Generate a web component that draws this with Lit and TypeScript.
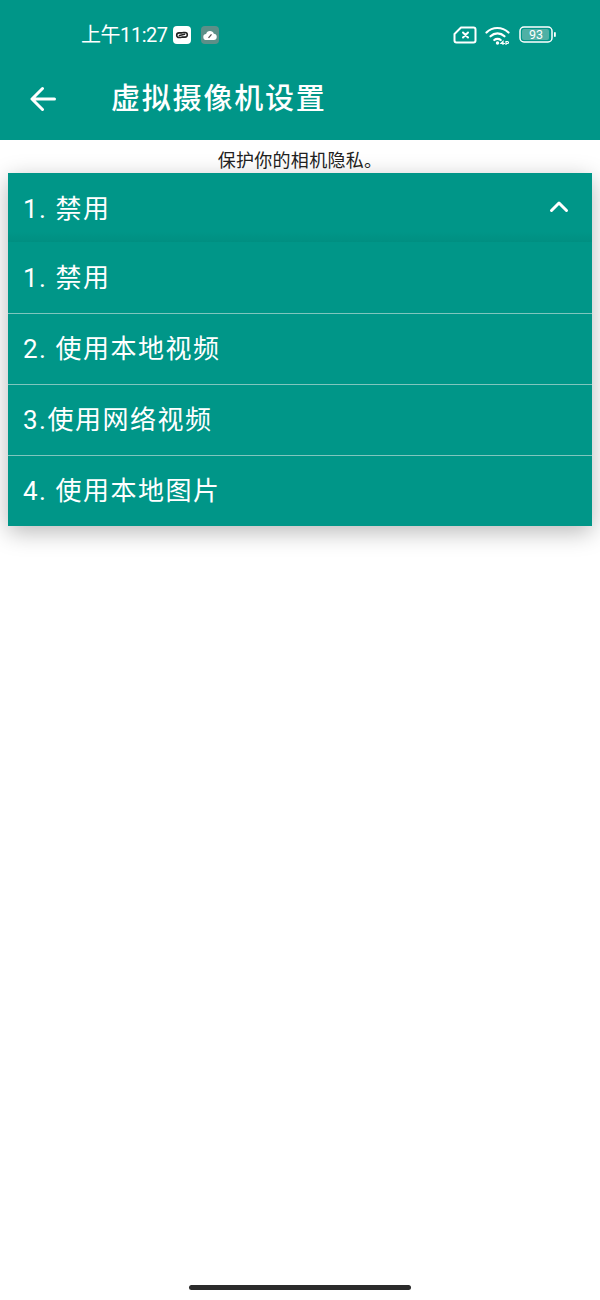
import { LitElement, html, css } from "lit";
import { customElement } from "lit/decorators.js";

const OPTIONS = ["1. 禁用", "2. 使用本地视频", "3.使用网络视频", "4. 使用本地图片"];

@customElement("app-root")
export class AppRoot extends LitElement {
  static styles = css`
    :host {
      display: block;
      width: 600px;
      height: 1300px;
      background: #fff;
      font-family: "Roboto", "Noto Sans CJK SC", sans-serif;
      color: #fff;
      overflow: hidden;
    }
    .page { display: flex; flex-direction: column; height: 1300px; }
    .header { background: #009688; height: 140px; display: flex; flex-direction: column; flex: none; }
    .status { height: 70px; display: flex; align-items: center; padding: 0 43px 0 81px; }
    .time { font-size: 20px; letter-spacing: -0.45px; line-height: 24px; margin-right: 5px; }
    .badge { width: 18px; height: 18px; border-radius: 4px; background: #fff; display: flex; align-items: center; justify-content: center; }
    .badge.grey { background: #5d8f88; margin-left: 10px; }
    .spacer { flex: 1; }
    .right { display: flex; align-items: center; gap: 8px; }
    .toolbar { height: 70px; display: flex; align-items: center; padding: 0 0 12px 30px; box-sizing: border-box; }
    .title { font-size: 29px; letter-spacing: 1.8px; font-weight: 500; margin-left: 55px; line-height: 40px; }
    .hint { height: 33px; line-height: 42px; text-align: center; font-size: 18px; letter-spacing: 0.3px; color: #222; flex: none; }
    .spinner { margin: 0 8px; box-shadow: 0 6px 22px rgba(0,0,0,.28); background: #009688; }
    .selected { height: 69px; display: flex; align-items: center; justify-content: space-between; padding: 0 23px 3px 15px; box-sizing: border-box; background: linear-gradient(#009688 85%, #008f81); }
    .opt { height: 71px; display: flex; align-items: center; padding: 0 0 5px 15px; box-sizing: border-box; }
    .opt + .opt { border-top: 1px solid #7fc6be; }
    .label { font-size: 26px; letter-spacing: 1.5px; }
    .home { margin-top: auto; margin-bottom: 10px; align-self: center; width: 222px; height: 5px; border-radius: 3px; background: #2b2b2b; flex: none; }
    svg { display: block; }
  `;

  render() {
    return html`
      <div class="page">
        <div class="header">
          <div class="status">
            <span class="time">上午11:27</span>
            <span class="badge">
              <svg width="14" height="10" viewBox="0 0 14 10" fill="none" stroke="#222" stroke-width="1.6" stroke-linecap="round">
                <path d="M6 7.5H4a2.3 2.3 0 0 1 0-4.6h3M8 2.5h2a2.3 2.3 0 0 1 0 4.6H7M4.5 5.5l5-1.2" />
              </svg>
            </span>
            <span class="badge grey">
              <svg width="14" height="11" viewBox="0 0 14 11">
                <path fill="#fff" d="M3.5 10a3 3 0 0 1-.4-6A4 4 0 0 1 10.8 3.800a3.100 3.100 0 0 1-.3 6.200z" />
                <path stroke="#555" stroke-width="1.300" d="M5.500 7.800 8.500 4.300" />
              </svg>
            </span>
            <span class="spacer"></span>
            <span class="right">
              <svg width="24" height="18" viewBox="0 0 24 18" fill="none" stroke="#fff" stroke-width="2" stroke-linejoin="round" stroke-linecap="round">
                <path d="M8 1.500h12.500a2 2 0 0 1 2 2v11a2 2 0 0 1-2 2H3.500a2 2 0 0 1-2-2V8z" />
                <path d="M10 6.500l5 5M15 6.500l-5 5" />
              </svg>
              <svg width="26" height="21" viewBox="0 0 26 21" fill="none" stroke="#fff" stroke-linecap="round">
                <path stroke-width="2.200" d="M1.500 7.500C7.500 1.500 17 1.500 23.500 7.500" />
                <path stroke-width="2.200" d="M5.500 11.300C9.500 7.500 15.500 7.500 19.500 11.300" />
                <path stroke-width="2.200" d="M9.300 15C11 13.400 14 13.400 15.700 15" />
                <circle cx="12.500" cy="18" r="1.700" fill="#fff" stroke="none" />
                <path stroke-width="1.200" d="M18 19.500v-3l-2 2h3.500M21 19.500v-3h1.500a1 1 0 0 1 0 2H21" />
              </svg>
              <svg width="38" height="18" viewBox="0 0 38 18">
                <rect x="1" y="1" width="32" height="15" rx="4" fill="none" stroke="#fff" stroke-width="1.500" />
                <rect x="3" y="3" width="27" height="11" rx="2" fill="#4fb0a5" />
                <text x="17" y="13" font-size="12.500" text-anchor="middle" fill="#fff" font-family="Roboto, sans-serif">93</text>
                <rect x="35" y="6" width="1.800" height="5" rx="0.900" fill="#fff" />
              </svg>
            </span>
          </div>
          <div class="toolbar">
            <svg width="26" height="26" viewBox="0 0 26 26" fill="none" stroke="#fff" stroke-width="3" stroke-linecap="round" stroke-linejoin="round">
              <path d="M24.500 13H2.500M12.500 2.500 2 13l10.500 10.500" />
            </svg>
            <span class="title">虚拟摄像机设置</span>
          </div>
        </div>
        <div class="hint">保护你的相机隐私。</div>
        <div class="spinner">
          <div class="selected">
            <span class="label">${OPTIONS[0]}</span>
            <svg width="20" height="13" viewBox="0 0 20 13" fill="none" stroke="#fff" stroke-width="3" stroke-linecap="round" stroke-linejoin="round">
              <path d="M2.500 10.500 10 3l7.500 7.500" />
            </svg>
          </div>
          ${OPTIONS.map((o) => html`<div class="opt"><span class="label">${o}</span></div>`)}
        </div>
        <div class="home"></div>
      </div>
    `;
  }
}
